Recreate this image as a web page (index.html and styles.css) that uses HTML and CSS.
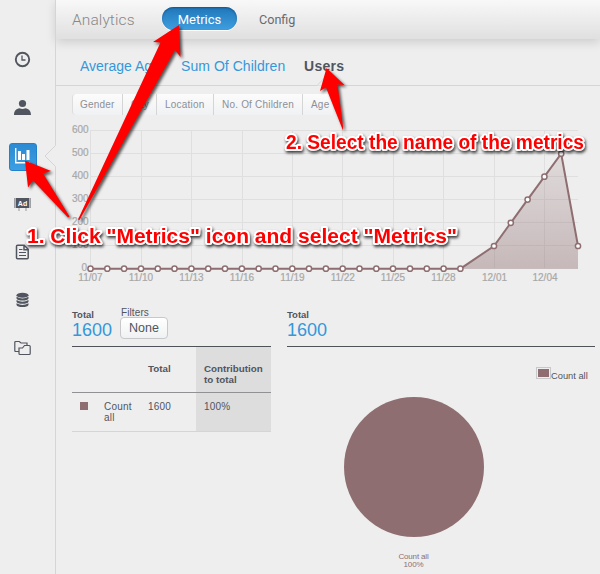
FILE: index.html
```html
<!DOCTYPE html>
<html lang="en">
<head>
<meta charset="utf-8">
<title>Analytics</title>
<link rel="stylesheet" href="styles.css">
</head>
<body>
<div class="app">
  <nav class="sidebar">
    <a class="side-item"><svg width="18" height="18" viewBox="0 0 18 18" fill="none" stroke="#50555f"><circle cx="8.500" cy="9.500" r="6.700" stroke-width="1.900"/><path d="M8 5.500V10H11.500" stroke-width="1.300"/></svg></a>
    <a class="side-item"><svg width="18" height="18" viewBox="0 0 18 18" fill="#50555f"><circle cx="8.500" cy="5.500" r="3.600"/><path d="M0 17c0-4 2-6.300 5.600-6.800 1.700 1 4 1 5.700 0 3.500.5 5.700 2.800 5.700 6.800z"/></svg></a>
    <a class="side-item active"><svg width="16" height="16" viewBox="0 0 16 16" fill="#fff"><path d="M0 0h1.400v14H15v1.400H0zM3 3h3v9H3zM7 6h3v6H7zM11.500 2h3v10h-3z"/></svg></a>
    <a class="side-item"><svg width="18" height="16" viewBox="0 0 18 16"><path d="M.5 2h16v10H.5z" fill="#50555f"/><path d="M1.500 2v10M15.500 2v10" stroke="#b8b1b5"/><path d="M5 12v3M12 12v3" stroke="#9a9494"/><text class="ad-text" x="8.500" y="9.500" text-anchor="middle">Ad</text></svg></a>
    <a class="side-item"><svg width="16" height="18" viewBox="0 0 16 18" fill="none" stroke="#50555f"><path d="M2.500 2.300h6.700l4 4v8.400q0 1-1 1H2.500q-1 0-1-1V3.300q0-1 1-1zM9 2.500V6.700h4.200" stroke-width="1.500"/><path d="M4 6.500h3.500M4 9.500h7M4 12.500h7" stroke-width="1.200"/></svg></a>
    <a class="side-item"><svg width="14" height="16" viewBox="0 0 14 16" fill="#50555f"><ellipse cx="6.500" cy="3.300" rx="6" ry="2.500"/><path d="M.5 4.700q6 3.400 12 0v1.800q-1 2-6 2t-6-2zM.5 8q6 3.400 12 0v1.800q-1 2-6 2t-6-2zM.5 11.300q6 3.400 12 0v1.800q-1 2-6 2t-6-2z"/></svg></a>
    <a class="side-item"><svg width="18" height="16" viewBox="0 0 18 16" fill="none" stroke="#50555f" stroke-width="1.200"><path d="M5 11.500H1.800q-1 0-1-1V2.500q0-1 1-1h3.500L7 3h6v2M6 14.500q-1 0-1-1V8h3.500l2-2.500h4.700q1 0 1 1v7q0 1-1 1z"/></svg></a>
    <svg class="notch" width="12" height="22" viewBox="0 0 12 22"><path class="notch-fill" d="M11 0h1v22h-1z"/><path d="M11.500 0v.500L1 11l10.500 10.500v.500" fill="none" stroke="#d5d5d5"/></svg>
  </nav>
  <main class="main">
    <header class="header">
      <h1 class="title">Analytics</h1>
      <a class="pill">Metrics</a>
      <a class="config">Config</a>
    </header>
    <div class="tabs">
      <a class="tab-age">Average Age</a>
      <a class="tab-sum">Sum Of Children</a>
      <a class="tab-users">Users</a>
      <svg class="tab-notch" width="18" height="10" viewBox="0 0 18 10"><path d="M0 9.500L8.500 1 17 9.500" fill="#eee" stroke="#d5d5d5"/></svg>
    </div>
    <div class="filters">
      <span class="f-gender">Gender</span><span class="f-city">City</span><span class="f-location">Location</span><span class="f-children">No. Of Children</span><span class="f-age">Age</span>
    </div>
    <svg class="chart" width="544" height="175" viewBox="56 115 544 175">
      <defs><linearGradient id="area" x1="0" y1="0" x2="0" y2="1"><stop offset="0" stop-color="#8f6e71" stop-opacity=".15"/><stop offset="1" stop-color="#8f6e71" stop-opacity=".42"/></linearGradient></defs>
      <path class="grid" d="M90 130.500H578M90 153.500H578M90 176.500H578M90 199.500H578M90 222.500H578M90 245.500H578M90 268.500H578M90.500 130V269M141.500 130V269M191.500 130V269M242.500 130V269M292.500 130V269M342.500 130V269M393.500 130V269M443.500 130V269M494.500 130V269M544.500 130V269"/>
      <g class="tick" text-anchor="end"><text x="88.700" y="133">600</text><text x="88.700" y="156">500</text><text x="88.700" y="179">400</text><text x="88.700" y="202">300</text><text x="88.700" y="225">200</text><text x="88.700" y="248">100</text><text x="87" y="271">0</text></g>
      <g class="tick" text-anchor="middle"><text x="90.500" y="281">11/07</text><text x="141" y="281">11/10</text><text x="191.500" y="281">11/13</text><text x="242" y="281">11/16</text><text x="292.500" y="281">11/19</text><text x="342.800" y="281">11/22</text><text x="393" y="281">11/25</text><text x="443.500" y="281">11/28</text><text x="494.500" y="281">12/01</text><text x="545" y="281">12/04</text></g>
      <path d="M460.500 268.700L494 246l16.800-23.200 16.800-23.200L544.400 176.700l16.800-23L578 246v22.700z" fill="url(#area)"/>
      <path d="M90.500 268.700H460.500L494 246l16.800-23.200 16.800-23.200L544.400 176.700l16.800-23L578 246" fill="none" stroke="#8f6e71" stroke-width="2"/>
      <g class="dots"><circle cx="90.500" cy="268.700" r="2.600"/><circle cx="107.300" cy="268.700" r="2.600"/><circle cx="124.100" cy="268.700" r="2.600"/><circle cx="141" cy="268.700" r="2.600"/><circle cx="157.800" cy="268.700" r="2.600"/><circle cx="174.500" cy="268.700" r="2.600"/><circle cx="191.400" cy="268.700" r="2.600"/><circle cx="208.200" cy="268.700" r="2.600"/><circle cx="225" cy="268.700" r="2.600"/><circle cx="241.900" cy="268.700" r="2.600"/><circle cx="258.700" cy="268.700" r="2.600"/><circle cx="275.500" cy="268.700" r="2.600"/><circle cx="292.300" cy="268.700" r="2.600"/><circle cx="309" cy="268.700" r="2.600"/><circle cx="325.900" cy="268.700" r="2.600"/><circle cx="342.700" cy="268.700" r="2.600"/><circle cx="359.500" cy="268.700" r="2.600"/><circle cx="376.300" cy="268.700" r="2.600"/><circle cx="393" cy="268.700" r="2.600"/><circle cx="410" cy="268.700" r="2.600"/><circle cx="426.800" cy="268.700" r="2.600"/><circle cx="443.600" cy="268.700" r="2.600"/><circle cx="460.400" cy="268.700" r="2.600"/><circle cx="494" cy="246" r="2.600"/><circle cx="510.800" cy="222.800" r="2.600"/><circle cx="527.600" cy="199.600" r="2.600"/><circle cx="544.400" cy="176.700" r="2.600"/><circle cx="561.200" cy="153.700" r="2.600"/><circle cx="578" cy="246" r="2.600"/></g>
    </svg>
    <div class="panels">
      <section class="panel-left">
        <div class="summary">
          <div class="total"><b>Total</b><span>1600</span></div>
          <div class="filter-box"><span>Filters</span><button>None</button></div>
        </div>
        <table>
          <tr><th class="c1"></th><th class="c2"></th><th class="c3">Total</th><th class="c4">Contribution to total</th></tr>
          <tr class="data"><td><i class="swatch"></i></td><td>Count all</td><td>1600</td><td class="c4">100%</td></tr>
        </table>
      </section>
      <section class="panel-right">
        <div class="summary"><div class="total"><b>Total</b><span>1600</span></div></div>
        <div class="legend"><i></i><span>Count all</span></div>
        <div class="pie"></div>
        <div class="pie-label">Count all<br>100%</div>
      </section>
    </div>
  </main>
  <svg class="notes" width="600" height="574" viewBox="0 0 600 574">
    <g class="arrows">
      <path d="M179 25L153 42l7.500 .500L78 219.500l1.500.500L175 50l5.500 7z"/>
      <path d="M25 160.500L28 187.500l5-7L68 217.500l1.500-1L43 173.500l8-2.500z"/>
      <path d="M326.500 68L320 91l6-3.500L343 130.500V126L337.500 84.500l7 .500z"/>
    </g>
    <g class="note-text">
      <text x="27" y="243.300" textLength="430" lengthAdjust="spacingAndGlyphs">1. Click "Metrics" icon and select "Metrics"</text>
      <text x="286" y="149" textLength="298" lengthAdjust="spacingAndGlyphs">2. Select the name of the metrics</text>
    </g>
  </svg>
</div>
</body>
</html>
```
FILE: styles.css
```css
* { box-sizing: border-box; }
body {
  margin: 0;
  background: #eee;
  color: #50555f;
  font-family: "Liberation Sans", Arial, sans-serif;
  font-size: 10px;
}
.app { position: relative; display: flex; width: 600px; height: 574px; overflow: hidden; }

.sidebar { position: relative; flex: none; width: 56px; padding: 35px 0 0 9px; border-right: 1px solid #d5d5d5; }
.side-item { display: flex; align-items: center; justify-content: center; width: 28px; height: 48px; }
.side-item svg { display: block; }
.side-item.active { height: 28px; margin: 12px 0 9px; padding-bottom: 2px; border-radius: 3px; border: 1px solid #2380cb; background: linear-gradient(#2b8ad3, #3c9fe2); }
.ad-text { font: bold 7px "Liberation Sans", sans-serif; fill: #fff; }
.notch { position: absolute; left: 44px; top: 145px; }
.notch-fill { fill: #eee; }

.main { flex: none; width: 544px; }
.header { display: flex; align-items: center; height: 39px; padding-left: 16px; background: linear-gradient(#f8f8f8, #e0e0e0); box-shadow: 0 3px 10px rgba(0,0,0,.15); font-family: Roboto, sans-serif; }
.title { width: 90px; margin: 1px 0 0; font-family: Roboto, sans-serif; font-size: 15.500px; font-weight: 300; line-height: 20px; letter-spacing: .1px; color: #888; }
.pill { width: 75px; height: 23px; margin-top: -2px; border-radius: 12px; background: linear-gradient(#1f76b9, #3f9fe0); box-shadow: 0 1px 0 #fff, inset 0 1px 2px rgba(0,50,100,.5); color: #fff; font-size: 13px; line-height: 25px; text-align: center; }
.config { margin-left: 22px; font-size: 12.600px; line-height: 20px; color: #666b73; }

.tabs { position: relative; display: flex; height: 47px; padding: 18px 0 0 24px; border-bottom: 1px solid #d5d5d5; font-size: 14px; line-height: 18px; color: #3498db; white-space: nowrap; }
.tab-age { width: 101px; }
.tab-sum { width: 123px; letter-spacing: .05px; }
.tab-users { color: #50555f; font-weight: bold; letter-spacing: .3px; }
.tab-notch { position: absolute; left: 261px; top: 37px; }

.filters { display: flex; height: 29px; padding: 8px 0 0 16px; font-size: 10px; line-height: 21px; color: #8c9097; white-space: nowrap; letter-spacing: .2px; }
.filters span { height: 21px; padding-left: 8px; border-right: 1px solid #d5d5d5; background: linear-gradient(#fcfcfc, #f0f1f2); }
.filters .f-gender { width: 51px; padding-left: 7px; border-left: 1px solid #ddd; border-radius: 4px 0 0 4px; }
.f-city { width: 34px; }
.f-location { width: 57px; }
.f-children { width: 89px; }
.filters .f-age { width: 30px; border-right: 0; }

.chart { display: block; }
.grid { stroke: #dfdfdf; fill: none; }
.tick { font: 10px "Liberation Sans", sans-serif; fill: #a8a8a8; stroke: #a8a8a8; stroke-width: .2px; }
.dots circle { fill: #fff; stroke: #8f6e71; stroke-width: 1.500px; }

.panels { display: grid; grid-template-columns: 199px 308px; column-gap: 16px; padding: 17px 0 0 16px; }
.summary { display: flex; height: 40px; border-bottom: 1px solid #50525a; }
.total { width: 48px; padding-top: 2px; }
.total b { display: block; font-size: 9.500px; line-height: 12px; }
.total span { display: block; font-size: 18px; line-height: 19px; color: #3498db; }
.filter-box { width: 50px; }
.filter-box span { display: block; padding-left: 1px; font-size: 10px; line-height: 11px; letter-spacing: .1px; height: 10px; }
.filter-box button { display: block; width: 48px; height: 22px; padding: 0; border: 1px solid #c7c8c9; border-radius: 4px; background: linear-gradient(#fff, #f0f1f2); color: #50555f; font: 12.500px "Liberation Sans", sans-serif; }

table { width: 199px; border-collapse: separate; border-spacing: 0; table-layout: fixed; line-height: 11px; }
th { height: 46px; padding: 16px 4px 0 8px; border-bottom: 1px solid #909195; font-size: 9.800px; text-align: left; vertical-align: top; }
td { height: 39px; padding: 8px 4px 0 8px; border-bottom: 1px solid #d5d5d5; font-size: 10px; letter-spacing: .2px; vertical-align: top; }
.c1 { width: 24px; }
.c2 { width: 44px; }
.c3 { width: 56px; }
.c4 { background: #ddd; }
.swatch { display: block; width: 8px; height: 8px; margin-top: 1px; background: #8f6e71; }

.legend { display: flex; align-items: flex-start; height: 33px; padding: 20px 0 0 249px; font-size: 9.300px; line-height: 18px; }
.legend i { flex: none; width: 15px; height: 12px; border: 1px solid #c7c8c9; padding: 1px; background: #8f6e71 content-box; }
.legend span { flex: none; }
.pie { width: 140px; height: 140px; margin: 17px 0 0 56.500px; border-radius: 50%; background: #8f6e71; }
.pie-label { width: 140px; margin: 16px 0 0 56.500px; color: #8f6e71; font-size: 8px; letter-spacing: -.15px; line-height: 8px; text-align: center; }

.notes { position: absolute; left: 0; top: 0; pointer-events: none; }
.arrows { fill: #f00; filter: drop-shadow(2px 2px 1.500px rgba(0,0,0,.65)); }
.note-text { font: bold 20px "Liberation Sans", sans-serif; fill: #f00; stroke: #fff; stroke-width: 4px; stroke-linejoin: round; paint-order: stroke; filter: drop-shadow(1px 2px 1.500px rgba(0,0,0,.75)); }
```
